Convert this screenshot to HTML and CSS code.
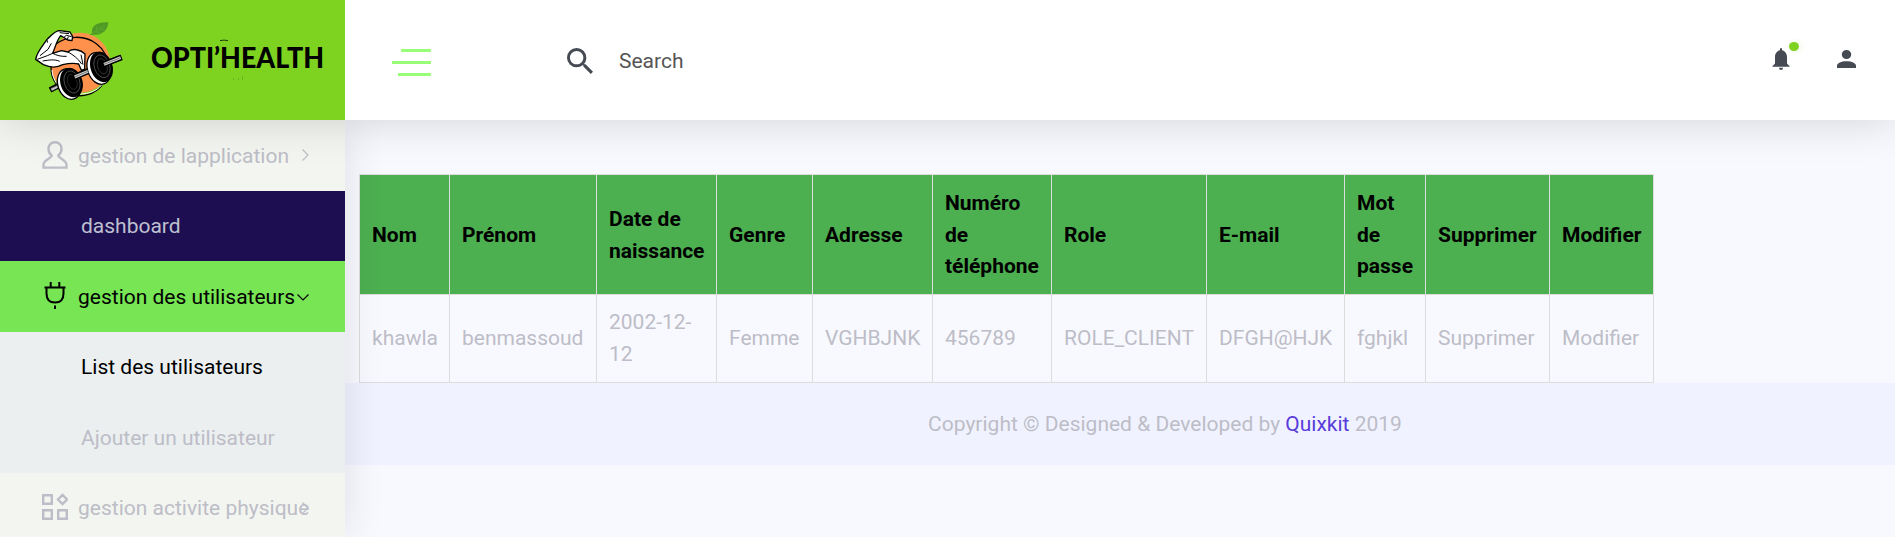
FILE: index.html
```
<!DOCTYPE html>
<html lang="fr">
<head>
<meta charset="utf-8">
<title>OPTI’HEALTH</title>
<link rel="stylesheet" href="styles.css">
</head>
<body>
<div class="topbar">
  <div class="brand">
    <svg class="brand-logo" viewBox="0 0 360 300" width="120" height="100">
      <circle cx="180" cy="158" r="90" fill="#ff914d"/>
      <path d="M107 103C140 76 196 74 230 102C252 118 266 145 263 172M93 170C92 213 120 243 153 253C190 264 224 252 246 226" fill="none" stroke="#000" stroke-width="4"/>
      <path d="M96 180C98 212 116 236 150 250M180 252C208 252 230 242 244 226" fill="none" stroke="#fff" stroke-width="3"/>
      <path d="M216 70C213 50 228 36 265 37C264 60 246 77 222 74L208 76Z" fill="#4e9a25"/>
      <path d="M216 72L254 46M231 62L228 48M241 56L253 60M229 64L240 69" stroke="#68ae31" stroke-width="2" fill="none"/>
      <path d="M47 148C50 126 70 105 82 87C94 77 105 62 119 62L150 66L158 80L156 92L143 90L134 84L122 77C112 88 108 105 98 130L124 122L144 126C157 112 183 120 195 132L194 177L184 181L176 162C160 158 145 160 128 164C110 174 88 172 70 164Z" fill="#fff" stroke="#000" stroke-width="4" stroke-linejoin="round"/>
      <path d="M119 68L147 71M132 82L139 76L155 80M142 88L145 80M52 148L82 137L98 130M68 153C87 150 104 147 119 154M98 130C110 136 122 140 140 139M144 126C160 135 174 145 185 162M80 88L83 98M94 100L84 118L60 137M183 134L189 164" fill="none" stroke="#000" stroke-width="3"/>
      <g stroke-linecap="butt">
        <path d="M90 240L118 226M163 200L216 178M250 163L305 142" stroke="#000" stroke-width="17"/>
        <path d="M94 239L118 227M165 200L214 179M252 163L302 143" stroke="#c8c8c8" stroke-width="8"/>
        <path d="M94 235L116 225M252 159L301 140" stroke="#444" stroke-width="2"/>
      </g>
      <g transform="rotate(-18 150 220)">
        <ellipse cx="147" cy="221" rx="34" ry="47" fill="#fff" stroke="#000" stroke-width="4"/>
        <ellipse cx="155" cy="219" rx="33" ry="45"/>
        <ellipse cx="157" cy="218" rx="23" ry="34" fill="none" stroke="#666" stroke-width="2"/>
        <ellipse cx="158" cy="218" rx="14" ry="23" fill="none" stroke="#333" stroke-width="2"/>
      </g>
      <g transform="rotate(-18 240 173)">
        <ellipse cx="236" cy="174" rx="34" ry="49" fill="#fff" stroke="#000" stroke-width="4"/>
        <ellipse cx="245" cy="172" rx="33" ry="47"/>
        <ellipse cx="247" cy="171" rx="23" ry="35" fill="none" stroke="#666" stroke-width="2"/>
        <ellipse cx="248" cy="171" rx="14" ry="24" fill="none" stroke="#444" stroke-width="2"/>
      </g>
      <path d="M160 203L204 184M250 163L304 142" stroke="#000" stroke-width="17"/>
      <path d="M164 201L204 184M252 163L302 143" stroke="#ccc" stroke-width="9"/>
      <path d="M164 201L204 184M252 163L302 143" stroke="#555" stroke-width="2"/>
    </svg>
    <svg class="brand-name" viewBox="0 0 190 50" width="190" height="50">
      <text x="0" y="38" textLength="173" lengthAdjust="spacingAndGlyphs">OPTI’HEALTH</text>
      <path d="M69 10.600q4-1 8 0" fill="none" stroke="#1b3a05" stroke-width="1"/>
      <path d="M82.500 48v2M87.500 48v2M91.500 46v4" stroke="#5da31a" stroke-width="1" opacity=".6"/>
    </svg>
  </div>
  <header class="header">
    <div class="hamburger"><span class="line l1"></span><span class="line l2"></span><span class="line l3"></span></div>
    <div class="search">
      <svg viewBox="3 3 17.5 17.5" width="26" height="26"><path fill="#464a53" d="M9.5 3A6.5 6.5 0 0 1 16 9.5c0 1.61-.59 3.09-1.56 4.23l.27.27h.79l5 5-1.5 1.5-5-5v-.79l-.27-.27A6.516 6.516 0 0 1 9.5 16a6.5 6.5 0 0 1 0-13m0 2C7 5 5 7 5 9.500S7 14 9.500 14 14 12 14 9.500 12 5 9.500 5z"/></svg>
      <span>Search</span>
    </div>
    <div class="actions">
      <div class="bell">
        <svg viewBox="3 2 18 20" width="18" height="22" preserveAspectRatio="none"><path fill="#464a53" d="M14 20a2 2 0 0 1-4 0h4M12 2a1 1 0 0 1 1 1v1.080C15.840 4.560 18 7.030 18 10v6l3 3H3l3-3v-6c0-2.970 2.160-5.440 5-5.920V3a1 1 0 0 1 1-1z"/></svg>
        <i class="dot"></i>
      </div>
      <svg viewBox="4 4 16 16" width="19" height="18" preserveAspectRatio="none"><path fill="#464a53" d="M12 4a4 4 0 1 1 0 8 4 4 0 0 1 0-8m0 10c4.420 0 8 1.790 8 4v2H4v-2c0-2.210 3.580-4 8-4z"/></svg>
    </div>
  </header>
</div>
<div class="page">
  <nav class="sidebar">
    <a class="item first">
      <svg class="icon" viewBox="0 0 26 28" width="26" height="28"><path d="M9.700 14.500C7.500 12.800 6.500 10.500 6.500 8C6.500 4 9 1.300 13 1.300S19.500 4 19.500 8C19.500 10.500 18.500 12.800 16.300 14.500C16.300 17 24.500 19 24.500 23.500V26.600H1.500V23.500C1.500 19 9.700 17 9.700 14.500Z"/></svg>
      <span class="label">gestion de lapplication</span>
      <svg class="chev" viewBox="0 0 12 12" width="12" height="12"><path d="M5.500 .5L11 6L5.500 11.500"/></svg>
    </a>
    <a class="item sub dash">dashboard</a>
    <a class="item active">
      <svg class="icon" viewBox="0 0 26 28" width="26" height="28"><path class="thin" d="M2.500 5.500H23.500M8.700 0V5.500M17.300 0V5.500M4.500 5.500V11.500C4.500 17 7.500 20.500 13 20.500S21.500 17 21.500 11.500V5.500M13 23.500V27"/></svg>
      <span class="label">gestion des utilisateurs</span>
      <svg class="chev" viewBox="0 0 12 12" width="12" height="12"><path d="M.5 4.500L6 10L11.500 4.500"/></svg>
    </a>
    <div class="submenu">
      <a class="item sub current">List des utilisateurs</a>
      <a class="item sub">Ajouter un utilisateur</a>
    </div>
    <a class="item last">
      <svg class="icon" viewBox="0 0 26 28" width="26" height="28"><path d="M1.200 2.200H9.800V10.800H1.200ZM1.200 17.200H9.800V25.800H1.200ZM16.200 17.200H24.800V25.800H16.200ZM20.500 1.900L25 6.500L20.500 11.100L16 6.500Z"/></svg>
      <span class="label">gestion activite physique</span>
      <svg class="chev" viewBox="0 0 12 12" width="12" height="12"><path d="M5.500 .5L11 6L5.500 11.500"/></svg>
    </a>
  </nav>
  <main class="main">
    <table class="users">
      <colgroup><col class="c1"><col class="c2"><col class="c3"><col class="c4"><col class="c5"><col class="c6"><col class="c7"><col class="c8"><col class="c9"><col class="c10"><col class="c11"></colgroup>
      <tr><th>Nom</th><th>Prénom</th><th>Date de naissance</th><th>Genre</th><th>Adresse</th><th>Numéro de téléphone</th><th>Role</th><th>E-mail</th><th>Mot de passe</th><th>Supprimer</th><th>Modifier</th></tr>
      <tr><td>khawla</td><td>benmassoud</td><td>2002-12-12</td><td>Femme</td><td>VGHBJNK</td><td>456789</td><td>ROLE_CLIENT</td><td>DFGH@HJK</td><td>fghjkl</td><td>Supprimer</td><td>Modifier</td></tr>
    </table>
    <footer class="footer">Copyright © Designed &amp; Developed by <a>Quixkit</a> 2019</footer>
  </main>
</div>
</body>
</html>
```
FILE: styles.css
```
* { box-sizing: border-box; }
body {
  margin: 0;
  height: 537px;
  overflow: hidden;
  background: #f8f9ff;
  color: #bdbdc7;
  font: 400 21px/31.5px Roboto, "Liberation Sans", sans-serif;
}
.topbar {
  display: flex;
  position: relative;
  z-index: 3;
  height: 120px;
  box-shadow: 0 0 45px rgba(0, 0, 0, .16);
}
.brand {
  display: flex;
  align-items: flex-start;
  width: 345px;
  padding: 10px 0 0 20px;
  background: #7ed321;
}
.brand-name { margin: 20px 0 0 11px; flex: none; }
.brand-logo { flex: none; }
.brand-name text { font: 900 28.500px Lato, sans-serif; fill: #000; }
.header {
  display: flex;
  flex: 1;
  align-items: center;
  background: #fff;
}
.hamburger {
  display: flex;
  flex-direction: column;
  align-items: flex-end;
  gap: 9px;
  width: 39px;
  margin: 5px 0 0 47px;
}
.line { height: 3px; background: #98ff76; }
.l1 { width: 30px; }
.l2 { width: 39px; }
.l3 { width: 33px; }
.search {
  display: flex;
  align-items: center;
  gap: 26px;
  margin: 2px 0 0 136px;
  color: #555;
}
.search span { padding-top: 2px; }
.actions {
  display: flex;
  align-items: center;
  gap: 47px;
  margin: -2px 39px 0 auto;
}
.actions svg { display: block; }
.bell { position: relative; }
.dot {
  position: absolute;
  left: 17px;
  top: -6px;
  width: 10px;
  height: 9px;
  border-radius: 50%;
  background: #7ed321;
  box-shadow: 2px 0 0 3px #f9fdf5;
}
.page { display: flex; height: 417px; }
.sidebar {
  position: relative;
  z-index: 2;
  width: 345px;
  background: #f3f5f0;
  box-shadow: 0 0 40px rgba(0, 0, 0, .11);
}
.item {
  display: flex;
  align-items: center;
  height: 70.500px;
  padding: 0 35px 0 42px;
}
.item.first { height: 71px; }
.item.first, .item.dash, .item.active { padding-top: 2px; }
.item.sub { padding-left: 81px; }
.submenu .item.sub + .item.sub { padding-top: 1px; }
.item.dash { height: 70px; background: #1d0e52; color: #bfc0cf; }
.item.active { height: 71px; background: #77e554; color: #000; }
.submenu { background: #ebeff0; }
.item.current { color: #000; }
.icon {
  flex: none;
  margin-right: 10px;
  margin-top: -3px;
  fill: none;
  stroke: currentColor;
  stroke-width: 2.400;
}
.thin { stroke-width: 2; }
.label { flex: 1; width: 0; white-space: nowrap; }
.chev {
  flex: none;
  margin-top: -4px;
  margin-right: 1px;
  fill: none;
  stroke: currentColor;
  stroke-width: 1.200;
}
.last .chev { margin-top: -1px; }
.main { flex: 1; padding-top: 54px; }
.users {
  table-layout: fixed;
  width: 1295px;
  margin-left: 14px;
  border-collapse: collapse;
}
.users th, .users td {
  height: 88px;
  padding: 12px;
  border: 1px solid #ddd;
  text-align: left;
}
.users th {
  height: 120px;
  padding-top: 13px;
  padding-bottom: 11px;
  background: #4caf50;
  color: #000;
  font-weight: 700;
}
.c1 { width: 90px; }
.c2 { width: 147px; }
.c3 { width: 120px; }
.c4 { width: 96px; }
.c5 { width: 120px; }
.c6 { width: 119px; }
.c7 { width: 155px; }
.c8 { width: 138px; }
.c9 { width: 81px; }
.c10 { width: 124px; }
.c11 { width: 104px; }
.footer {
  height: 82px;
  padding: 26px 0 0 90px;
  background: #f0f3ff;
  text-align: center;
}
.footer a { color: #593bdb; }
```
